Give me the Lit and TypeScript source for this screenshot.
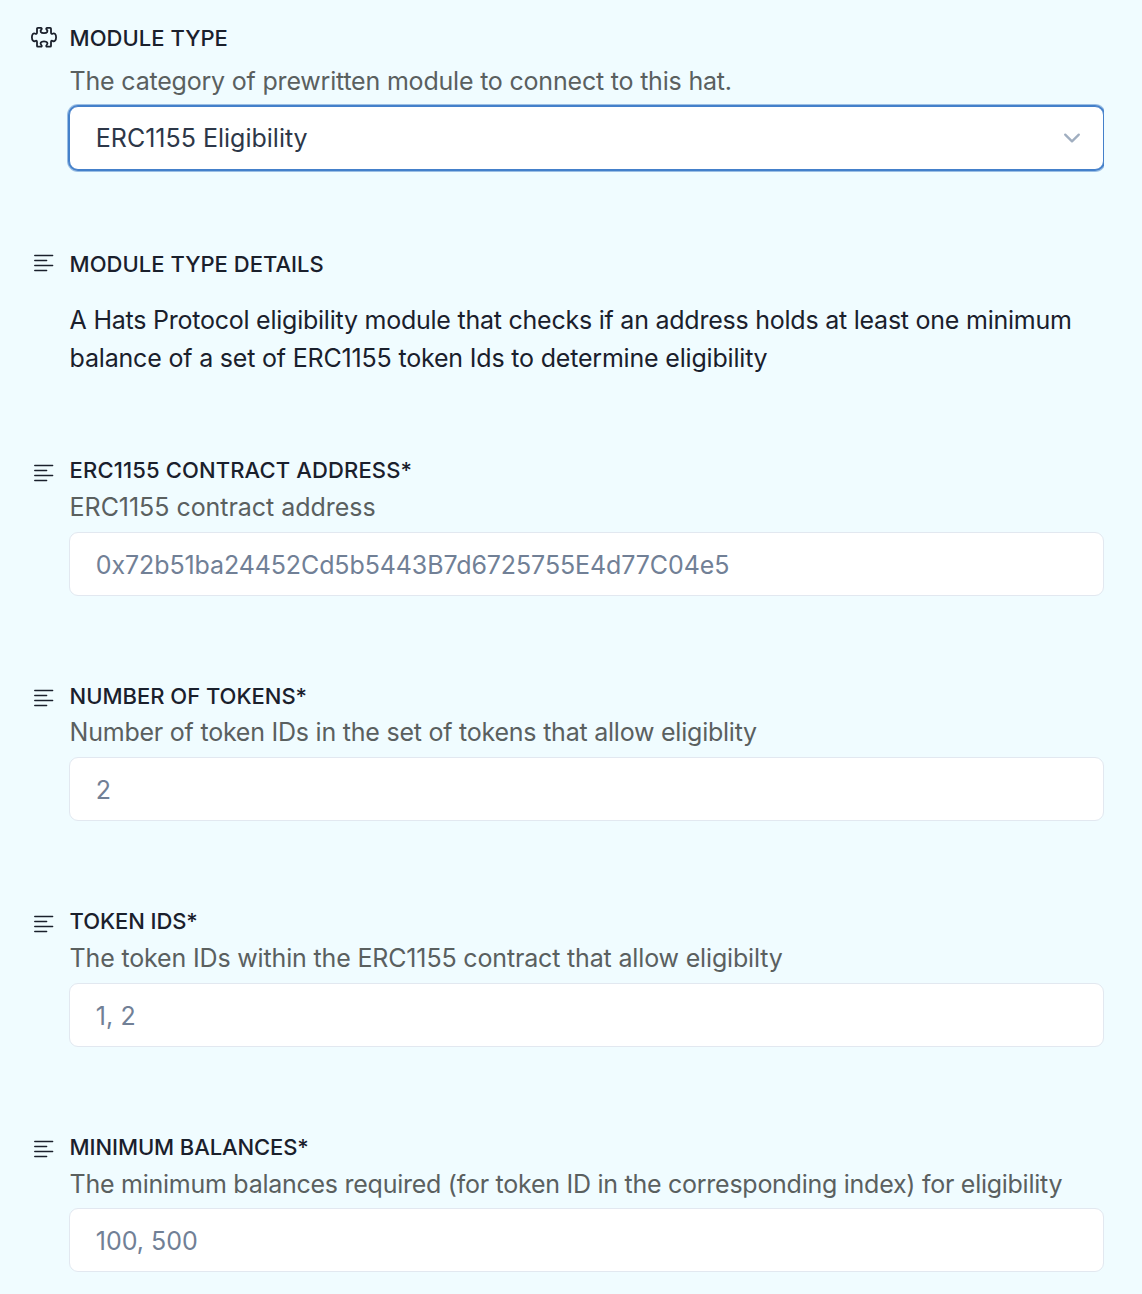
import { LitElement, html, svg, css } from "lit";
import { customElement, property } from "lit/decorators.js";

interface Line {
  text: string;
  track: number;
}

interface Field {
  label: Line;
  hint: Line;
  placeholder: Line;
}

const FIELDS: Field[] = [
  {
    label: { text: "ERC1155 CONTRACT ADDRESS*", track: 0.135 },
    hint: { text: "ERC1155 contract address", track: -0.04 },
    placeholder: { text: "0x72b51ba24452Cd5b5443B7d6725755E4d77C04e5", track: -0.105 },
  },
  {
    label: { text: "NUMBER OF TOKENS*", track: -0.021 },
    hint: { text: "Number of token IDs in the set of tokens that allow eligiblity", track: -0.228 },
    placeholder: { text: "2", track: 0 },
  },
  {
    label: { text: "TOKEN IDS*", track: -0.09 },
    hint: { text: "The token IDs within the ERC1155 contract that allow eligibilty", track: -0.16 },
    placeholder: { text: "1, 2", track: 0.1 },
  },
  {
    label: { text: "MINIMUM BALANCES*", track: -0.1 },
    hint: {
      text: "The minimum balances required (for token ID in the corresponding index) for eligibility",
      track: -0.262,
    },
    placeholder: { text: "100, 500", track: 0 },
  },
];

const DETAILS: Line[] = [
  { text: "A Hats Protocol eligibility module that checks if an address holds at least one minimum", track: -0.238 },
  { text: "balance of a set of ERC1155 token Ids to determine eligibility", track: -0.188 },
];

const tracked = (line: Line) => html`<span style="letter-spacing:${line.track}px">${line.text}</span>`;

const puzzle = svg`<path d="M6.8 .9H9.7C10.9 .9 11.1 1.9 10.4 2.5C8.6 4.2 9.7 6.2 13 6.2C16.3 6.2 17.4 4.2 15.6 2.5C14.9 1.9 15.1 .9 16.3 .9H19.2Q20 .9 20 1.7V5.6C20 6.8 20.8 7.2 21.6 6.7C23.4 5.6 25.1 7.2 25.1 10.3C25.1 13.4 23.4 15 21.6 13.9C20.8 13.4 20 13.8 20 15V18.9Q20 19.7 19.2 19.7H16.3C15.1 19.7 14.9 18.7 15.6 18.1C17.4 16.4 16.3 14.4 13 14.4C9.7 14.4 8.6 16.4 10.4 18.1C11.1 18.7 10.9 19.7 9.7 19.7H6.8Q6 19.7 6 18.9V15C6 13.8 5.2 13.4 4.4 13.9C2.6 15 .9 13.4 .9 10.3C.9 7.2 2.6 5.6 4.4 6.7C5.2 7.2 6 6.8 6 5.6V1.7Q6 .9 6.8 .9Z"/>`;

@customElement("form-row")
export class FormRow extends LitElement {
  @property() icon: "puzzle" | "text" = "text";

  static styles = css`
    :host {
      display: grid;
      grid-template-columns: 38px minmax(0, 1fr);
    }
    .icon {
      display: block;
      fill: none;
      stroke: #1a202c;
    }
    .puzzle {
      width: 26px;
      height: 21px;
      margin-top: 4.5px;
      stroke-width: 1.8;
      stroke-linejoin: round;
    }
    .text {
      width: 20px;
      height: 18px;
      margin: var(--icon-top, 9.5px) 0 0 3px;
      stroke-width: 1.5;
      stroke-linecap: round;
    }
  `;

  render() {
    return html`
      ${this.icon === "puzzle"
        ? html`<svg class="icon puzzle" viewBox="0 0 26 21">${puzzle}</svg>`
        : html`<svg class="icon text" viewBox="0 0 20 18">
            <path d="M.8 1.4H18.6M.8 6.4H12.6M.8 11.4H18.6M.8 16.4H12.6" />
          </svg>`}
      <div><slot></slot></div>
    `;
  }
}

@customElement("app-root")
export class AppRoot extends LitElement {
  static styles = css`
    :host {
      display: block;
      box-sizing: border-box;
      height: 1294px;
      padding: 22px 38px 0 31px;
      overflow: hidden;
      background: #f0fcff;
      color: #1a202c;
      font: 400 25px/38px Inter, "Liberation Sans", sans-serif;
    }
    h2 {
      margin: 0;
      padding-left: 0.6px;
      font-size: 22px;
      font-weight: 500;
      line-height: 32px;
      white-space: nowrap;
    }
    p {
      margin: 0;
      padding-left: 0.6px;
      white-space: nowrap;
    }
    .hint {
      margin-top: 1.7px;
      color: #5a605f;
    }
    .picker .hint {
      margin-top: 8px;
    }
    .select {
      display: flex;
      align-items: center;
      justify-content: space-between;
      box-sizing: border-box;
      height: 64px;
      margin-top: 6px;
      padding: 0 22px 0 25.8px;
      border: 1px solid #4480ca;
      border-radius: 9px;
      background: #fff;
      color: #2d3748;
      box-shadow: 0 0 0 1px #4480ca, 0 0 0 2px #4480ca80;
      clip-path: inset(-3px 0 -3px -3px);
    }
    .chevron {
      width: 18px;
      height: 12px;
      fill: none;
      stroke: #a0aec0;
      stroke-width: 2.3;
      stroke-linecap: round;
      stroke-linejoin: round;
    }
    .details {
      --icon-top: 6px;
      margin-top: 78px;
    }
    .details h2 {
      margin-bottom: 21px;
    }
    .fields {
      display: flex;
      flex-direction: column;
      gap: 84.07px;
      margin-top: 77.2px;
    }
    .input {
      display: block;
      box-sizing: border-box;
      width: 100%;
      height: 64px;
      margin-top: 5.8px;
      padding: 2.2px 25px 0 25.8px;
      border: 1px solid #e2e8f0;
      border-radius: 9px;
      outline: none;
      background: #fff;
      color: inherit;
      font: inherit;
    }
    .input::placeholder {
      color: #718096;
      opacity: 1;
    }
  `;

  render() {
    return html`
      <form-row class="picker" icon="puzzle">
        <h2>${tracked({ text: "MODULE TYPE", track: 0.02 })}</h2>
        <p class="hint">
          ${tracked({ text: "The category of prewritten module to connect to this hat.", track: -0.2 })}
        </p>
        <div class="select">
          ${tracked({ text: "ERC1155 Eligibility", track: 0 })}
          <svg class="chevron" viewBox="0 0 18 12"><path d="M2.2 2.6L9 9.4L15.8 2.6" /></svg>
        </div>
      </form-row>
      <form-row class="details">
        <h2>${tracked({ text: "MODULE TYPE DETAILS", track: 0.02 })}</h2>
        ${DETAILS.map((line) => html`<p>${tracked(line)}</p>`)}
      </form-row>
      <div class="fields">
        ${FIELDS.map(
          (f) => html`
            <form-row>
              <h2>${tracked(f.label)}</h2>
              <p class="hint">${tracked(f.hint)}</p>
              <input
                class="input"
                placeholder=${f.placeholder.text}
                style="letter-spacing:${f.placeholder.track}px"
              />
            </form-row>
          `
        )}
      </div>
    `;
  }
}
